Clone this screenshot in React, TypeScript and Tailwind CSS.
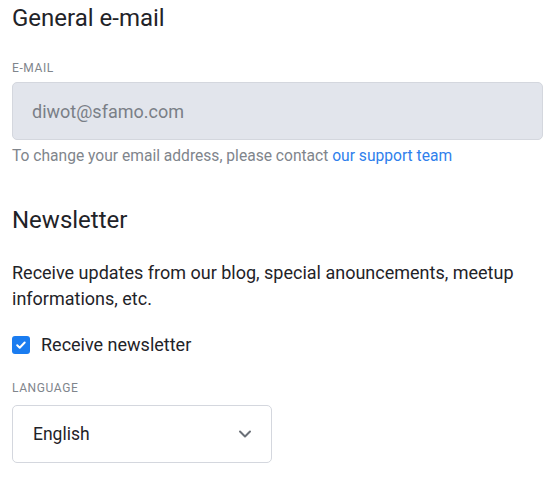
import React, { useState } from 'react';

const font = { fontFamily: 'Roboto, "Liberation Sans", sans-serif' };

export default function App() {
    const [checked, setChecked] = useState(true);
    const [lang, setLang] = useState('English');

    return (
        <div className="w-[558px] h-[478px] bg-white px-3 pt-[4px] text-[#1f2328]" style={font}>
            <h2 className="text-[24px] leading-[28px]">General e-mail</h2>

            <label className="block mt-[28px] text-[12px] leading-[16px] uppercase tracking-[0.6px] text-[#80858c]">E-mail</label>
            <div className="mt-[6px] h-[58px] w-[531px] rounded-[5px] border border-[#d4d7de] bg-[#e2e5ec] flex items-center pl-[19px] text-[18px] text-[#7a7f87]">
                diwot@sfamo.com
            </div>
            <p className="mt-[5px] text-[15.6px] leading-[22px] text-[#80858c]">
                To change your email address, please contact <a href="#" className="text-[#2f7fec]">our support team</a>
            </p>

            <h2 className="mt-[39px] text-[24px] leading-[28px]">Newsletter</h2>
            <p className="mt-[26px] text-[18px] leading-[26px] w-[520px]">
                Receive updates from our blog, special anouncements, meetup informations, etc.
            </p>

            <label className="mt-[21px] flex items-center gap-[11px] text-[18px] leading-[24px] cursor-pointer">
                <button
                    onClick={() => setChecked(!checked)}
                    className={`w-[18px] h-[18px] rounded-[3px] flex items-center justify-center ${checked ? 'bg-[#1a7cf0]' : 'border border-gray-400 bg-white'}`}
                >
                    {checked && (
                        <svg viewBox="0 0 12 12" className="w-[12px] h-[12px]" fill="none" stroke="white" strokeWidth="2" strokeLinecap="round" strokeLinejoin="round">
                            <path d="M2.2 6.3l2.5 2.4 5-5.2" />
                        </svg>
                    )}
                </button>
                Receive newsletter
            </label>

            <label className="block mt-[23px] text-[12px] leading-[16px] uppercase tracking-[0.6px] text-[#80858c]">Language</label>
            <div className="mt-[9px] h-[58px] w-[260px] rounded-[5px] border border-[#d4d7de] bg-white flex items-center justify-between pl-[20px] pr-[19px] text-[17.5px]">
                <span>{lang}</span>
                <svg viewBox="0 0 14 8" className="w-[14px] h-[8px]" fill="none" stroke="#6b7078" strokeWidth="2" strokeLinecap="round" strokeLinejoin="round" onClick={() => setLang(lang)}>
                    <path d="M2 1.5l5 5 5-5" />
                </svg>
            </div>
        </div>
    );
}
